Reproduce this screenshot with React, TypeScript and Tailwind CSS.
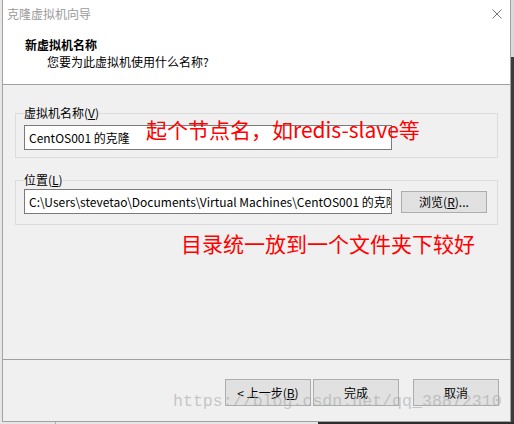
export default function App() {
  return (
    <div className="relative w-[514px] h-[424px] overflow-hidden flex flex-col bg-[#e6e6e6] font-['Noto_Sans_CJK_SC',sans-serif] text-[12px] text-black">
      <div className="flex h-[422px]">
        <div className="w-[2px] bg-[#e6e6e6]" />

        {/* 向导窗口 */}
        <div className="w-[509px] h-[422px] flex flex-col border-x border-b border-[#a3a3a3] bg-[#f0f0f0]">
          {/* 标题栏 + 页头 */}
          <div className="h-[85px] shrink-0 bg-white border-b border-[#a0a0a0]">
            <div className="h-[27px] flex items-center justify-between pl-[4px] pr-[8px]">
              <span className="leading-[16px] text-[#9a9a9a]">克隆虚拟机向导</span>
              <svg width="10" height="10" viewBox="0 0 10 10" className="text-[#777777]">
                <path d="M0.5 0.5L9.5 9.5M9.5 0.5L0.5 9.5" stroke="currentColor" strokeWidth="1" fill="none" />
              </svg>
            </div>
            <div className="pl-[22px] pt-[10px]">
              <div className="font-bold leading-[16px]">新虚拟机名称</div>
              <div className="pl-[22px] leading-[16px] mt-[1px]">您要为此虚拟机使用什么名称?</div>
            </div>
          </div>

          {/* 内容区 */}
          <div className="flex-1 pt-[20px]">
            <fieldset className="mx-[12px] border border-[#dcdcdc] px-[8px] pt-[4px] pb-[7px]">
              <legend className="leading-[16px]">
                虚拟机名称(<u>V</u>)
              </legend>
              <div className="w-[368px] h-[25px] flex items-center bg-white border border-[#7a7a7a] pl-[4px] overflow-hidden whitespace-nowrap leading-[16px]">
                CentOS001 的克隆
              </div>
            </fieldset>

            <fieldset className="mx-[12px] mt-[14px] border border-[#dcdcdc] px-[8px] pt-[1px] pb-[10px]">
              <legend className="leading-[16px]">
                位置(<u>L</u>)
              </legend>
              <div className="flex items-center gap-[9px]">
                <div className="w-[368px] h-[25px] flex items-center bg-white border border-[#7a7a7a] pl-[4px] overflow-hidden whitespace-nowrap leading-[16px]">
                  C:\Users\stevetao\Documents\Virtual Machines\CentOS001 的克隆
                </div>
                <button className="w-[86px] h-[22px] flex items-center justify-center bg-[#e1e1e1] border border-[#adadad] leading-[16px]">
                  浏览(<u>R</u>)...
                </button>
              </div>
            </fieldset>
          </div>

          {/* 底部按钮 */}
          <div className="h-[62px] shrink-0 border-t border-[#a0a0a0] flex justify-end items-start pt-[19px] pr-[11px]">
            <button className="w-[86px] h-[27px] flex items-center justify-center bg-[#e1e1e1] border border-[#adadad] leading-[16px]">
              &lt; 上一步(<u>B</u>)
            </button>
            <button className="ml-[2px] w-[86px] h-[27px] flex items-center justify-center bg-[#e1e1e1] border border-[#adadad] leading-[16px]">
              完成
            </button>
            <button className="ml-[14px] w-[86px] h-[27px] flex items-center justify-center bg-[#e1e1e1] border border-[#adadad] leading-[16px]">
              取消
            </button>
          </div>
        </div>

        <div className="w-[3px] flex flex-col">
          <div className="h-[57px] bg-[#d9d9d9]" />
          <div className="flex-1 bg-[#3c3c3c]" />
        </div>
      </div>

      <div className="h-[2px] flex">
        <div className="w-[55px] bg-[#e6e6e6]" />
        <div className="w-[263px] bg-[#e6e6e6] border-l border-[#b0b0b0]" />
        <div className="flex-1 bg-[#2e2e2e]" />
      </div>

      {/* 标注文字 */}
      <div className="absolute left-[146px] top-[117px] text-[21px] leading-[24px] text-[#ff0000] whitespace-nowrap">
        起个节点名，如redis-slave等
      </div>
      <div className="absolute left-[181px] top-[231px] text-[21px] leading-[24px] text-[#ff0000] whitespace-nowrap">
        目录统一放到一个文件夹下较好
      </div>

      {/* 水印 */}
      <div className="absolute left-[173px] top-[392px] font-['Liberation_Mono',monospace] text-[16.6px] leading-[20px] text-[#a8a8a8]/60 whitespace-nowrap pointer-events-none">
        https://blog.csdn.net/qq_38872310
      </div>
    </div>
  );
}
